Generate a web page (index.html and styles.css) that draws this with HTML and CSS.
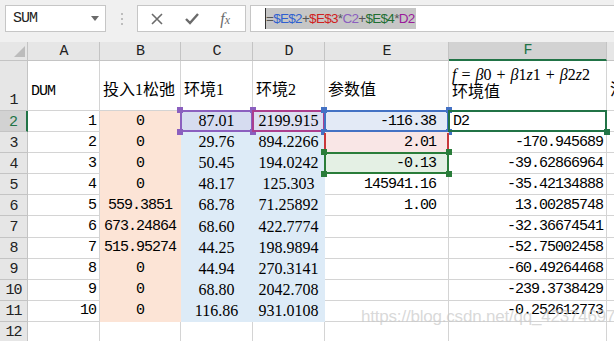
FILE: index.html
```html
<!DOCTYPE html>
<html lang="zh">
<head>
    <meta charset="UTF-8">
    <title>Sheet</title>
    <link rel="stylesheet" href="styles.css">
</head>
<body>
    <div class="toolbar">
        <div class="namebox">SUM<span class="caret"></span></div>
        <div class="dots">
            <svg width="4" height="12" viewBox="0 0 4 12"><rect x="1" y="0" width="2" height="2" fill="#bdbdbd"/><rect x="1" y="5" width="2" height="2" fill="#bdbdbd"/><rect x="1" y="10" width="2" height="2" fill="#bdbdbd"/></svg>
        </div>
        <div class="fbtns">
            <svg width="12" height="12" viewBox="0 0 12 12"><path d="M1 1 L11 11 M11 1 L1 11" stroke="#6b6b6b" stroke-width="1.6" fill="none"/></svg>
            <svg width="14" height="12" viewBox="0 0 14 12"><path d="M1 6 L5 10 L13 1" stroke="#6b6b6b" stroke-width="2.4" fill="none"/></svg>
            <span class="fx"><i>f</i><i class="x">x</i></span>
        </div>
        <div class="formula">
            <span class="sel"><span class="op">=</span><span class="k-blue">$E$2</span><span class="op">+</span><span class="k-red">$E$3</span><span class="op">*</span><span class="k-purple">C2</span><span class="op">+</span><span class="k-green">$E$4</span><span class="op">*</span><span class="k-mag">D2</span></span>
        </div>
    </div>

    <div class="sheet">
        <!-- header row -->
        <div class="hd corner"><span class="tri"></span></div>
        <div class="hd">A</div>
        <div class="hd">B</div>
        <div class="hd">C</div>
        <div class="hd">D</div>
        <div class="hd">E</div>
        <div class="hd col-sel">F</div>
        <div class="hd"></div>

        <!-- row 1 -->
        <div class="hd rh bottom">1</div>
        <div class="h1">DUM</div>
        <div class="h1 cjk">投入1松弛</div>
        <div class="h1 cjk">环境1</div>
        <div class="h1 cjk">环境2</div>
        <div class="h1 cjk">参数值</div>
        <div class="h1 cjk stack">
            <span class="math"><i>f</i> = <i>β</i>0 + <i>β</i>1<i>z</i>1 + <i>β</i>2<i>z</i>2</span>
            <span>环境值</span>
        </div>
        <div class="h1 cjk">潜在</div>

        <!-- row 2 -->
        <div class="hd rh row-sel">2</div>
        <div class="n">1</div>
        <div class="c fill-pk">0</div>
        <div class="c t ref r-purple"><span class="hdl h-tl"></span><span class="hdl h-tr"></span><span class="hdl h-bl"></span><span class="hdl h-br"></span>87.01</div>
        <div class="c t ref r-mag">2199.915</div>
        <div class="n e ref r-blue"><span class="hdl h-tl"></span><span class="hdl h-tr"></span><span class="hdl h-bl"></span><span class="hdl h-br"></span>-116.38</div>
        <div class="active">D2<span class="hdl h-br"></span></div>
        <div></div>

        <!-- row 3 -->
        <div class="hd rh">3</div>
        <div class="n">2</div>
        <div class="c fill-pk">0</div>
        <div class="c t fill-bl">29.76</div>
        <div class="c t fill-bl">894.2266</div>
        <div class="n e ref r-red">2.01</div>
        <div class="n">-170.945689</div>
        <div></div>

        <!-- row 4 -->
        <div class="hd rh">4</div>
        <div class="n">3</div>
        <div class="c fill-pk">0</div>
        <div class="c t fill-bl">50.45</div>
        <div class="c t fill-bl">194.0242</div>
        <div class="n e ref r-green"><span class="hdl h-tl"></span><span class="hdl h-tr"></span><span class="hdl h-bl"></span><span class="hdl h-br"></span>-0.13</div>
        <div class="n">-39.62866964</div>
        <div></div>

        <!-- row 5 -->
        <div class="hd rh">5</div>
        <div class="n">4</div>
        <div class="c fill-pk">0</div>
        <div class="c t fill-bl">48.17</div>
        <div class="c t fill-bl">125.303</div>
        <div class="n e">145941.16</div>
        <div class="n">-35.42134888</div>
        <div></div>

        <!-- row 6 -->
        <div class="hd rh">6</div>
        <div class="n">5</div>
        <div class="c fill-pk">559.3851</div>
        <div class="c t fill-bl">68.78</div>
        <div class="c t fill-bl">71.25892</div>
        <div class="n e">1.00</div>
        <div class="n">13.00285748</div>
        <div></div>

        <!-- row 7 -->
        <div class="hd rh">7</div>
        <div class="n">6</div>
        <div class="c fill-pk">673.24864</div>
        <div class="c t fill-bl">68.60</div>
        <div class="c t fill-bl">422.7774</div>
        <div></div>
        <div class="n">-32.36674541</div>
        <div></div>

        <!-- row 8 -->
        <div class="hd rh">8</div>
        <div class="n">7</div>
        <div class="c fill-pk">515.95274</div>
        <div class="c t fill-bl">44.25</div>
        <div class="c t fill-bl">198.9894</div>
        <div></div>
        <div class="n">-52.75002458</div>
        <div></div>

        <!-- row 9 -->
        <div class="hd rh">9</div>
        <div class="n">8</div>
        <div class="c fill-pk">0</div>
        <div class="c t fill-bl">44.94</div>
        <div class="c t fill-bl">270.3141</div>
        <div></div>
        <div class="n">-60.49264468</div>
        <div></div>

        <!-- row 10 -->
        <div class="hd rh">10</div>
        <div class="n">9</div>
        <div class="c fill-pk">0</div>
        <div class="c t fill-bl">68.80</div>
        <div class="c t fill-bl">2042.708</div>
        <div></div>
        <div class="n">-239.3738429</div>
        <div></div>

        <!-- row 11 -->
        <div class="hd rh">11</div>
        <div class="n">10</div>
        <div class="c fill-pk">0</div>
        <div class="c t fill-bl">116.86</div>
        <div class="c t fill-bl">931.0108</div>
        <div></div>
        <div class="n">-0.252612773</div>
        <div></div>

        <!-- row 12 -->
        <div class="hd rh">12</div>
        <div></div>
        <div></div>
        <div></div>
        <div></div>
        <div></div>
        <div></div>
        <div></div>
    </div>

    <div class="watermark">https://blog.csdn.net/qq_42374697</div>
</body>
</html>
```

FILE: styles.css
```css
body {
    margin: 0;
    width: 614px;
    height: 341px;
    overflow: hidden;
    position: relative;
    background-color: #f0f0f0;
    font-family: "Liberation Mono", monospace;
}

/* formula bar */
.toolbar {
    height: 42px;
    box-sizing: border-box;
    padding-top: 5px;
    display: flex;
    align-items: flex-start;
}

.namebox {
    margin-left: 5px;
    width: 101px;
    height: 27px;
    box-sizing: border-box;
    border: 1px solid #c6c6c6;
    background-color: #fff;
    display: flex;
    align-items: center;
    padding-left: 7px;
    font-size: 15px;
    letter-spacing: -1px;
    color: #222;
}

.caret {
    margin-left: auto;
    margin-right: 6px;
    border-left: 4px solid transparent;
    border-right: 4px solid transparent;
    border-top: 5px solid #6b6b6b;
}

.dots {
    width: 31px;
    height: 27px;
    display: flex;
    align-items: center;
    justify-content: center;
}

.fbtns {
    width: 109px;
    height: 27px;
    box-sizing: border-box;
    border: 1px solid #c6c6c6;
    background-color: #fff;
    display: flex;
    align-items: center;
    justify-content: space-between;
    padding: 0 15px 0 13px;
}

.fx {
    font-family: "Liberation Serif", serif;
    font-size: 16px;
    color: #6b6b6b;
}

.fx .x {
    font-size: 12px;
}

.formula {
    flex: 1;
    margin-left: 4px;
    margin-right: -3px;
    height: 27px;
    box-sizing: border-box;
    border: 1px solid #c6c6c6;
    background-color: #fff;
    padding: 2px 0 0 14px;
}

.formula .sel {
    display: inline-block;
    height: 21px;
    line-height: 21px;
    padding-right: 1px;
    background-color: #c6c6c6;
    border-left: 1px solid #333;
    font-family: "Liberation Sans", Arial, sans-serif;
    font-size: 13.5px;
    letter-spacing: -0.7px;
}

.op { color: #555; }
.k-blue { color: #2f5fd0; }
.k-red { color: #d02020; }
.k-purple { color: #8b5fbf; }
.k-green { color: #1f6f32; }
.k-mag { color: #9a1b9a; }

/* grid of cells */
.sheet {
    display: grid;
    grid-template-columns: 28px 72px 81px 72px 72px 124px 158px 60px;
    grid-template-rows: 19px 50px repeat(10, 21.1px) 20px;
    width: 667px;
    background-color: #fff;
}

.sheet > div {
    position: relative;
    box-sizing: border-box;
    border-right: 1px solid #d4d4d4;
    border-bottom: 1px solid #d4d4d4;
    display: flex;
    align-items: center;
    padding: 0 3px;
    white-space: nowrap;
    font-size: 15px;
    letter-spacing: -1px;
    color: #000;
}

.sheet > .hd {
    background-color: #e6e6e6;
    border-color: #c4c4c4;
    justify-content: center;
    color: #222;
    padding: 0;
}

.sheet > .corner {
    justify-content: flex-end;
    align-items: flex-end;
}

.tri {
    margin: 0 2px 3px 0;
    border-left: 11px solid transparent;
    border-bottom: 11px solid #bcbcbc;
}

.sheet > .rh {
    padding-top: 2px;
}

.sheet > .bottom {
    align-items: flex-end;
    padding-bottom: 1px;
}

.sheet > .col-sel {
    background-color: #d2d2d2;
    color: #217346;
    border-bottom: 2px solid #217346;
}

.sheet > .row-sel {
    background-color: #d2d2d2;
    color: #217346;
    border-right: 2px solid #217346;
}

/* header row 1 */
.sheet > .h1 {
    align-items: flex-end;
    padding-bottom: 10px;
}

.sheet > .cjk {
    font-family: "Liberation Serif", "Noto Sans CJK SC", serif;
    font-size: 16px;
    letter-spacing: 0;
}

.sheet > .stack {
    flex-direction: column;
    align-items: flex-start;
    justify-content: flex-end;
    line-height: 16px;
}

.math {
    font-family: "Liberation Serif", serif;
    font-size: 16px;
    margin-bottom: 1px;
    word-spacing: 1px;
}

/* value cells */
.sheet > .n {
    justify-content: flex-end;
}

.sheet > .e {
    padding-right: 12px;
}

.sheet > .c {
    justify-content: center;
}

.sheet > .t {
    font-family: "Liberation Serif", serif;
    font-size: 16px;
    letter-spacing: 0;
}

.sheet > .fill-pk {
    background-color: #fce4d6;
    border-color: #fce4d6;
}

.sheet > .fill-bl {
    background-color: #ddebf7;
    border-color: #ddebf7;
}

/* formula reference boxes */
.sheet > .ref {
    z-index: 2;
}

.ref::after {
    content: "";
    position: absolute;
    left: -1px;
    top: -1px;
    right: -1px;
    bottom: -1px;
    border: 2px solid var(--rc);
}

.sheet > .r-purple { --rc: #8b5fbf; background-color: #d6dcf0; border-color: #d6dcf0; }
.sheet > .r-mag { --rc: #ab3f8f; background-color: #dcdff1; border-color: #dcdff1; }
.sheet > .r-blue { --rc: #4472c4; background-color: #e3eaf6; }
.sheet > .r-red { --rc: #c8383b; background-color: #f9e6e6; }
.sheet > .r-green { --rc: #2a7d3a; background-color: #e4f0e4; }

.r-red::after {
    top: 1px;
    bottom: 1px;
    border-top: none;
    border-bottom: none;
}

.hdl {
    position: absolute;
    width: 6px;
    height: 6px;
    background-color: var(--rc);
    z-index: 1;
}

.h-tl { left: -4px; top: -4px; }
.h-tr { right: -4px; top: -4px; }
.h-bl { left: -4px; bottom: -4px; }
.h-br { right: -4px; bottom: -4px; }

.sheet > .active {
    --rc: #217346;
    z-index: 3;
    padding-left: 4px;
}

.active::after {
    content: "";
    position: absolute;
    left: -1px;
    top: -1px;
    right: -1px;
    bottom: -1px;
    border: 2px solid #217346;
}

.watermark {
    position: absolute;
    left: 361px;
    top: 307px;
    font-family: "Liberation Sans", Arial, sans-serif;
    font-size: 17px;
    color: rgba(200, 200, 200, 0.7);
    letter-spacing: -0.2px;
}
```
